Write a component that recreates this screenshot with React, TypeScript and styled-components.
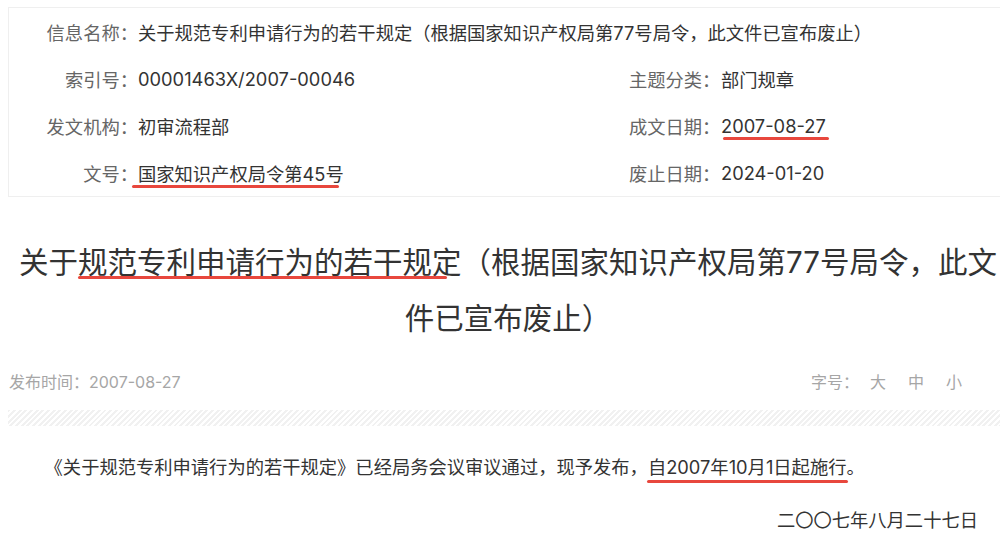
import React from "react";
import styled, { createGlobalStyle } from "styled-components";

const COLOR = {
  TEXT: "#333333",
  LABEL: "#666666",
  META: "#a6a6a6",
  LINE: "#efefef",
  STRIPE: "#f1f1f1",
  MARK: "#e8473d",
};

const GlobalStyle = createGlobalStyle`
  html, body {
    margin: 0;
    padding: 0;
    background: #ffffff;
    overflow: hidden;
  }
  body {
    font-family: Inter, "Noto Sans CJK SC", sans-serif;
    color: ${COLOR.TEXT};
  }
`;

interface IInfo {
  label: string;
  value: string;
  mark?: boolean;
}

const rows: [IInfo, IInfo][] = [
  [
    { label: "索引号：", value: "00001463X/2007-00046" },
    { label: "主题分类：", value: "部门规章" },
  ],
  [
    { label: "发文机构：", value: "初审流程部" },
    { label: "成文日期：", value: "2007-08-27", mark: true },
  ],
  [
    { label: "文号：", value: "国家知识产权局令第45号", mark: true },
    { label: "废止日期：", value: "2024-01-20" },
  ],
];

const TITLE = "关于规范专利申请行为的若干规定（根据国家知识产权局第77号局令，此文件已宣布废止）";

const App = () => {
  return (
    <>
      <GlobalStyle />
      <Page>
        <InfoBox>
          <Label>信息名称：</Label>
          <WideValue>{TITLE}</WideValue>
          {rows.map(([left, right]) => (
            <React.Fragment key={left.label}>
              <Label>{left.label}</Label>
              <Value>
                {left.mark ? (
                  <Mark $left={-6} $right={5} $bottom={-3}>
                    {left.value}
                  </Mark>
                ) : (
                  left.value
                )}
              </Value>
              <Label $side="left">{right.label}</Label>
              <Value>
                {right.mark ? (
                  <Mark $left={2} $right={-3} $bottom={-3}>
                    {right.value}
                  </Mark>
                ) : (
                  right.value
                )}
              </Value>
            </React.Fragment>
          ))}
        </InfoBox>

        <Title>
          关于
          <Mark $left={0} $right={15} $bottom={1}>
            规范专利申请行为的若干规定
          </Mark>
          （根据国家知识产权局第77号局令，此文件已宣布废止）
        </Title>

        <MetaRow>
          <span>发布时间：2007-08-27</span>
          <SizeSwitch>
            <SizeLabel>字号：</SizeLabel>
            <SizeOption>大</SizeOption>
            <SizeOption>中</SizeOption>
            <SizeOption>小</SizeOption>
          </SizeSwitch>
        </MetaRow>

        <StripeBar />

        <Paragraph>
          《关于规范专利申请行为的若干规定》已经局务会议审议通过，现予发布，
          <Mark $left={-1} $right={-2} $bottom={-5}>
            自2007年10月1日起施行
          </Mark>
          。
        </Paragraph>

        <DateLine>二〇〇七年八月二十七日</DateLine>
      </Page>
    </>
  );
};

const Page = styled.div`
  width: 1000px;
  margin: 7px 0 0 8px;
`;

const InfoBox = styled.div`
  display: grid;
  grid-template-columns: 129px 491px 92px 1fr;
  grid-auto-rows: 47px;
  align-items: center;
  border: 1px solid ${COLOR.LINE};
  font-size: 18.3px;
`;

const Label = styled.div<{ $side?: "left" | "right" }>`
  text-align: ${(props) => props.$side ?? "right"};
  color: ${COLOR.LABEL};
  white-space: nowrap;
`;

const Value = styled.div`
  color: ${COLOR.TEXT};
  white-space: nowrap;
`;

const WideValue = styled(Value)`
  grid-column: 2 / -1;
`;

const Mark = styled.span<{ $left: number; $right: number; $bottom: number }>`
  position: relative;

  &::after {
    content: "";
    position: absolute;
    left: ${(props) => props.$left}px;
    right: ${(props) => props.$right}px;
    bottom: ${(props) => props.$bottom}px;
    height: 3px;
    border-radius: 2px;
    background: ${COLOR.MARK};
  }
`;

const Title = styled.h1`
  margin: 37px 0 0;
  font-size: 29.5px;
  font-weight: 400;
  line-height: 56px;
  text-align: center;
  color: ${COLOR.TEXT};
`;

const MetaRow = styled.div`
  display: flex;
  justify-content: space-between;
  align-items: center;
  margin-top: 23px;
  padding: 0 46px 0 1px;
  height: 24px;
  font-size: 16px;
  color: ${COLOR.META};
`;

const SizeSwitch = styled.div`
  display: flex;
  align-items: center;
  gap: 22px;
`;

const SizeLabel = styled.span`
  margin-right: -11px;
`;

const SizeOption = styled.span`
  cursor: pointer;
`;

const StripeBar = styled.div`
  margin-top: 17px;
  height: 16px;
  background: repeating-linear-gradient(
    135deg,
    ${COLOR.STRIPE} 0 2px,
    #ffffff 2px 4px
  );
`;

const Paragraph = styled.p`
  margin: 25px 0 0;
  font-size: 18.3px;
  line-height: 32px;
  text-indent: 2em;
  color: ${COLOR.TEXT};
`;

const DateLine = styled.p`
  margin: 21px 0 0;
  padding-right: 30px;
  font-size: 18.3px;
  line-height: 32px;
  text-align: right;
  color: ${COLOR.TEXT};
`;

export default App;
